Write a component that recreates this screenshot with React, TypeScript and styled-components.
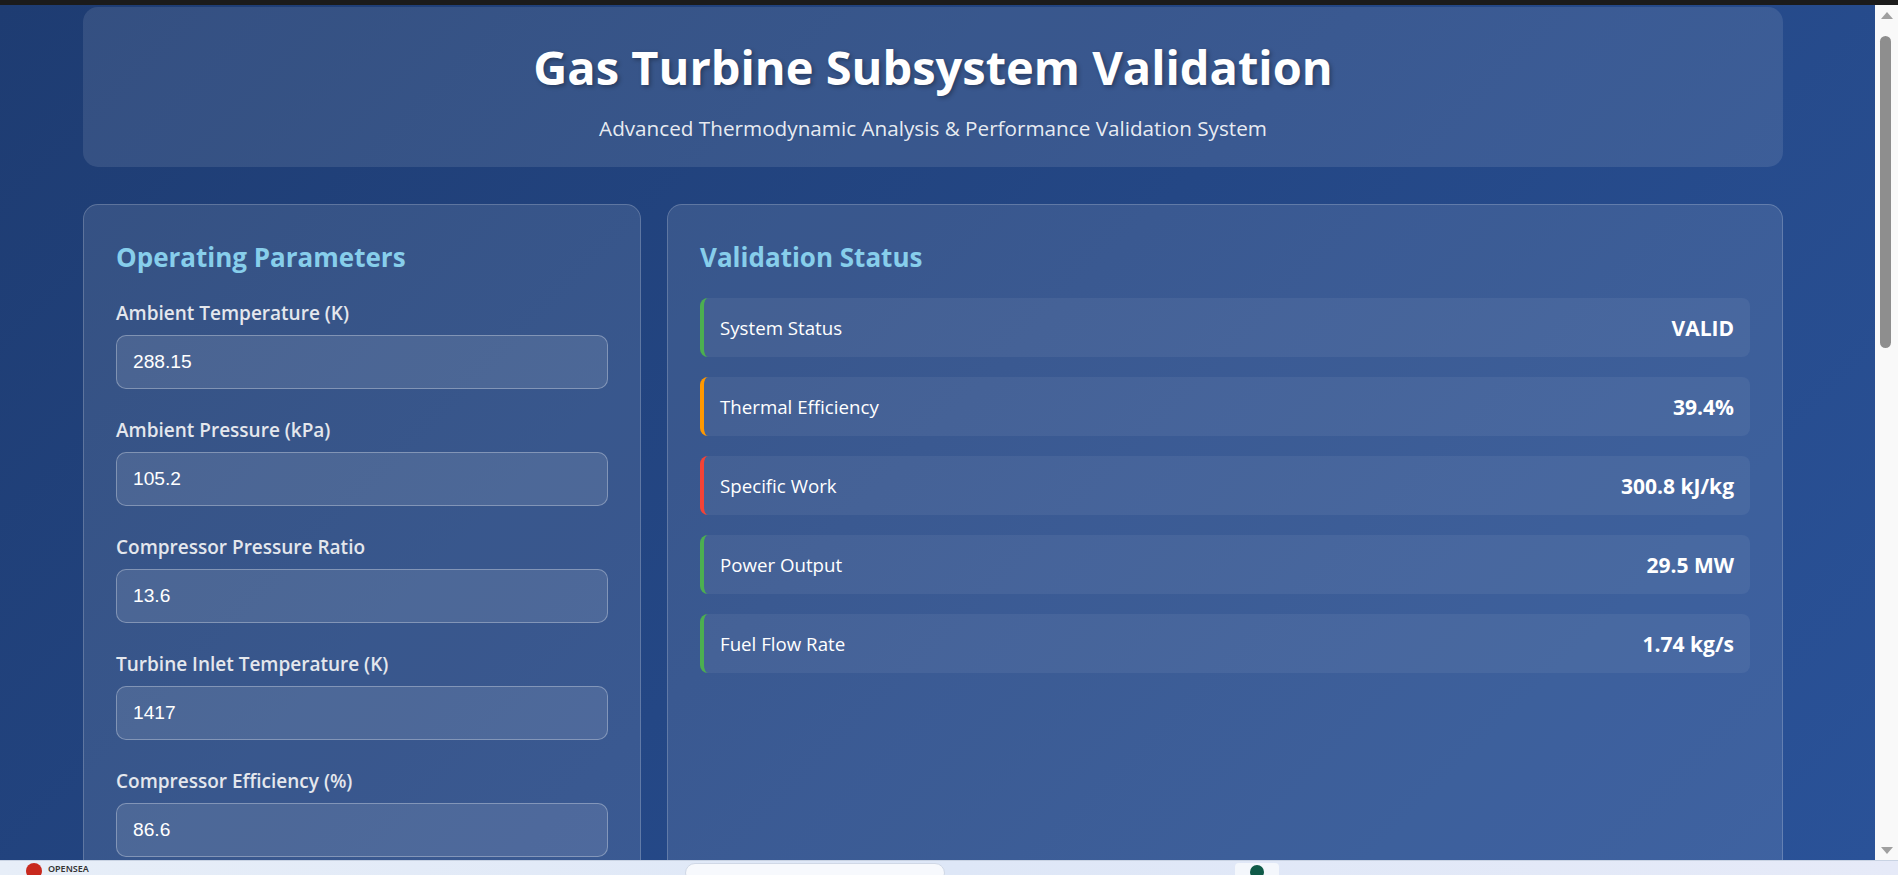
import React from "react";
import styled, { createGlobalStyle } from "styled-components";

const GlobalStyle = createGlobalStyle`
  html, body { margin: 0; padding: 0; height: 100%; overflow: hidden; }
  body { font-family: "Open Sans", "Noto Sans", sans-serif; background: #1e3c72; }
  #root { height: 100%; }
  * { box-sizing: border-box; }
`;

const Screen = styled.div`
  display: flex;
  flex-direction: column;
  height: 875px;
  width: 1898px;
`;

const TopBar = styled.div`
  height: 5px;
  flex-shrink: 0;
  background: #1b1b1b;
`;

const Viewport = styled.div`
  flex: 1;
  min-height: 0;
  display: flex;
  overflow: hidden;
`;

const Page = styled.main`
  flex: 1;
  min-width: 0;
  overflow: hidden;
  padding: 2px 92px 0 83px;
  background: linear-gradient(135deg, #1e3c72 0%, #2a5298 100%);
`;

const Container = styled.div`
  width: 1700px;
`;

const Header = styled.header`
  height: 160px;
  padding: 32px 32px 26px;
  border-radius: 15px;
  background: rgba(255, 255, 255, 0.1);
  text-align: center;
`;

const Title = styled.h1`
  margin: 0 0 20px;
  font-size: 47px;
  line-height: 56px;
  font-weight: 700;
  color: #ffffff;
  text-shadow: 2px 2px 4px rgba(0, 0, 0, 0.3);
`;

const Subtitle = styled.p`
  margin: 0;
  font-size: 20.7px;
  line-height: 26px;
  color: rgba(255, 255, 255, 0.9);
`;

const Grid = styled.div`
  display: grid;
  grid-template-columns: 1fr 2fr;
  gap: 26px;
  margin-top: 37px;
`;

const Panel = styled.section`
  padding: 32px;
  border-radius: 15px;
  border: 1px solid rgba(255, 255, 255, 0.2);
  background: rgba(255, 255, 255, 0.1);
`;

const PanelTitle = styled.h2`
  margin: 0 0 21px;
  font-size: 26px;
  line-height: 40px;
  font-weight: 700;
  color: #87ceeb;
`;

const Field = styled.div`
  margin-bottom: 26px;
`;

const Label = styled.label`
  display: block;
  margin-bottom: 7px;
  font-size: 19px;
  line-height: 30px;
  font-weight: 600;
  color: #e4e7ed;
`;

const Input = styled.input`
  display: block;
  width: 100%;
  height: 54px;
  padding: 0 16px;
  border-radius: 10px;
  border: 1px solid rgba(255, 255, 255, 0.3);
  background: rgba(255, 255, 255, 0.1);
  color: #ffffff;
  font-family: "Liberation Sans", Arial, sans-serif;
  font-size: 19.2px;
  outline: none;
`;

const StatusList = styled.div`
  display: flex;
  flex-direction: column;
  gap: 20px;
`;

const StatusRow = styled.div<{ $accent: string }>`
  display: flex;
  align-items: center;
  justify-content: space-between;
  height: 59px;
  padding: 0 16px;
  border-radius: 8px;
  border-left: 4px solid ${(p) => p.$accent};
  background: rgba(255, 255, 255, 0.06);
`;

const RowLabel = styled.span`
  font-size: 18.7px;
  color: #ffffff;
`;

const RowValue = styled.span`
  font-size: 21px;
  font-weight: 700;
  color: #ffffff;
`;

const Scrollbar = styled.div`
  width: 23px;
  flex-shrink: 0;
  display: flex;
  flex-direction: column;
  align-items: center;
  padding: 7px 0 6px;
  background: #f9f9f9;
`;

const Arrow = styled.div<{ $down?: boolean }>`
  width: 0;
  height: 0;
  border-left: 6px solid transparent;
  border-right: 6px solid transparent;
  ${(p) =>
    p.$down
      ? "border-top: 7px solid #a0a0a0;"
      : "border-bottom: 7px solid #a0a0a0;"}
`;

const Thumb = styled.div`
  width: 11px;
  height: 312px;
  margin-top: 17px;
  margin-right: 3px;
  border-radius: 6px;
  background: #8e8e8e;
`;

const Spacer = styled.div`
  flex: 1;
`;

const Taskbar = styled.footer`
  height: 15px;
  flex-shrink: 0;
  display: flex;
  align-items: flex-start;
  padding-top: 2px;
  border-top: 1px solid #c9d3e3;
  background: linear-gradient(90deg, #e7eef8 0%, #dee7f7 50%, #e6eaf8 100%);
  overflow: hidden;
`;

const TaskIcon = styled.div`
  width: 16px;
  height: 16px;
  margin-left: 26px;
  border-radius: 50%;
  background: #c8291e;
`;

const TaskText = styled.span`
  margin-left: 6px;
  font-family: "Noto Sans", sans-serif;
  font-size: 9px;
  line-height: 11px;
  font-weight: 600;
  color: #333;
`;

const SearchPill = styled.div`
  width: 260px;
  height: 20px;
  margin-left: 596px;
  border-radius: 10px;
  border: 1px solid #d0d8e6;
  background: #f7f9fd;
`;

const AppTile = styled.div`
  width: 44px;
  height: 20px;
  margin-left: 290px;
  border-radius: 4px;
  background: #f4f7fc;
  display: flex;
  justify-content: center;
  padding-top: 2px;
`;

const AppDot = styled.div`
  width: 14px;
  height: 14px;
  border-radius: 50%;
  background: #0f5a48;
`;

const params = [
  { label: "Ambient Temperature (K)", value: "288.15" },
  { label: "Ambient Pressure (kPa)", value: "105.2" },
  { label: "Compressor Pressure Ratio", value: "13.6" },
  { label: "Turbine Inlet Temperature (K)", value: "1417" },
  { label: "Compressor Efficiency (%)", value: "86.6" },
];

const statuses = [
  { label: "System Status", value: "VALID", accent: "#4caf50" },
  { label: "Thermal Efficiency", value: "39.4%", accent: "#ff9800" },
  { label: "Specific Work", value: "300.8 kJ/kg", accent: "#f44336" },
  { label: "Power Output", value: "29.5 MW", accent: "#4caf50" },
  { label: "Fuel Flow Rate", value: "1.74 kg/s", accent: "#4caf50" },
];

export default function App() {
  return (
    <>
      <GlobalStyle />
      <Screen>
        <TopBar />
        <Viewport>
          <Page>
            <Container>
              <Header>
                <Title>Gas Turbine Subsystem Validation</Title>
                <Subtitle>
                  Advanced Thermodynamic Analysis &amp; Performance Validation System
                </Subtitle>
              </Header>
              <Grid>
                <Panel>
                  <PanelTitle>Operating Parameters</PanelTitle>
                  {params.map((p, i) => (
                    <Field key={p.label}>
                      <Label htmlFor={`param-${i}`}>{p.label}</Label>
                      <Input id={`param-${i}`} type="text" defaultValue={p.value} />
                    </Field>
                  ))}
                </Panel>
                <Panel>
                  <PanelTitle>Validation Status</PanelTitle>
                  <StatusList>
                    {statuses.map((s) => (
                      <StatusRow key={s.label} $accent={s.accent}>
                        <RowLabel>{s.label}</RowLabel>
                        <RowValue>{s.value}</RowValue>
                      </StatusRow>
                    ))}
                  </StatusList>
                </Panel>
              </Grid>
            </Container>
          </Page>
          <Scrollbar>
            <Arrow />
            <Thumb />
            <Spacer />
            <Arrow $down />
          </Scrollbar>
        </Viewport>
        <Taskbar>
          <TaskIcon />
          <TaskText>OPENSEA</TaskText>
          <SearchPill />
          <AppTile>
            <AppDot />
          </AppTile>
        </Taskbar>
      </Screen>
    </>
  );
}
